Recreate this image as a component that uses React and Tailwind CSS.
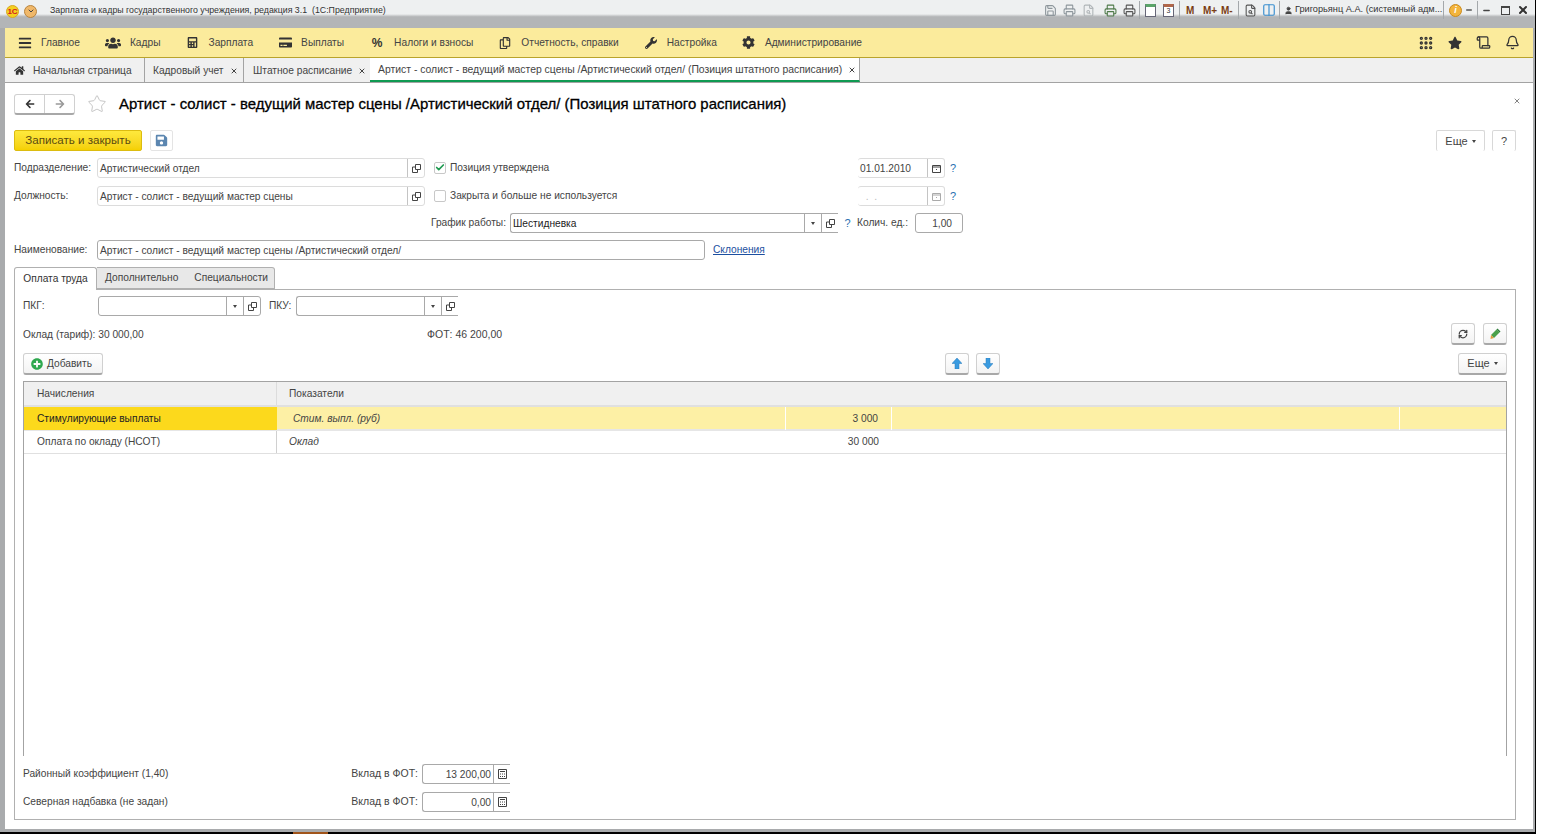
import React from 'react'
import { Bell, Check, ChevronDown, Columns2, FileSearch, Grip, Minus, Printer, RefreshCw, Save, Scroll, Star, User, X } from 'lucide-react'
import { FaArrowLeft, FaArrowRight, FaCalculator, FaCog, FaCreditCard, FaPlusCircle, FaRegCopy, FaSave, FaStar, FaUsers, FaWrench, FaHome, FaBars } from 'react-icons/fa'

const sections = [
  { title: 'Главное', icon: <FaBars size={14} />, box: 'w-[14px] mr-[9px]' },
  { title: 'Кадры', icon: <FaUsers size={16} />, box: 'w-[16px] mr-[9px]' },
  { title: 'Зарплата', icon: <FaCalculator size={11} />, box: 'w-[14px] mr-[9px]' },
  { title: 'Выплаты', icon: <FaCreditCard size={13} />, box: 'w-[14px] mr-[9px]' },
  { title: 'Налоги и взносы', icon: <span className="text-[12px] font-bold">%</span>, box: 'w-[16px] mr-[9px]' },
  { title: 'Отчетность, справки', icon: <FaRegCopy size={12} />, box: 'w-[14px] mr-[9px]' },
  { title: 'Настройка', icon: <FaWrench size={12} />, box: 'w-[14px] mr-[9px]' },
  { title: 'Администрирование', icon: <FaCog size={13} />, box: 'w-[14px] mr-[9px]' },
]

const OpenIcon = ({ className = 'text-[#444]' }) => (
  <svg width="9" height="9" viewBox="0 0 9 9" fill="none" stroke="currentColor" className={className}>
    <path d="M3.5 .5h5v5h-5z" />
    <path d="M3.5 3h-3v5.500h5v-3" />
  </svg>
)

const CalendarIcon = ({ className = 'text-[#444]' }) => (
  <svg width="9" height="9" viewBox="0 0 9 9" fill="none" stroke="currentColor" className={className}>
    <path d="M.5 1.500h8v7h-8z" />
    <path d="M.5 3h8" />
    <path d="M4 5h1v1h-1z" fill="currentColor" stroke="none" />
  </svg>
)

const CalcIcon = () => (
  <svg width="9" height="10" viewBox="0 0 9 10" fill="none" stroke="#444">
    <path d="M.5 .5h8v9h-8z" />
    <path d="M2 2.500h5M2 5h1M4 5h1M6 5h1M2 7.500h1M4 7.500h1M6 7.500h1" />
  </svg>
)

const BlueArrow = ({ down }) => (
  <svg width="10" height="11" viewBox="0 0 10 11" className={down ? 'rotate-180' : ''}>
    <path d="M5 0l5 5.500h-3v5.500h-4v-5.500h-3z" fill="#3a9be0" stroke="#2b7dbd" strokeWidth=".5" />
  </svg>
)

const PenIcon = () => (
  <svg width="12" height="12" viewBox="0 0 12 12">
    <path d="M7.500 1.500l3 3-5.500 5.500-3-3z" fill="#4aa04a" />
    <path d="M2 7l3 3-3.500 1z" fill="#e09a3c" />
    <path d="M8.500.5l3 3-1 1-3-3z" fill="#2f7d3a" />
  </svg>
)

const Arrow = () => <span className="block w-0 h-0 border-x-[2.500px] border-x-transparent border-t-[3px] border-t-[#444]" />

const Field = ({ value = '', width, light, right, buttons = [], textClass = 'text-[#444]' }) => (
  <div className={`flex h-5 shrink-0 bg-white border rounded-[3px] ${width} ${light ? 'border-[#dcdcdc]' : 'border-[#a9a9a9]'}`}>
    <div className={`flex-1 min-w-0 px-[2px] leading-[20px] whitespace-nowrap overflow-hidden ${right ? 'text-right' : ''} ${textClass}`}>{value}</div>
    {buttons.map((b, i) => (
      <div key={i} className={`w-[17px] flex items-center justify-center border-l ${light ? 'border-[#c4c4c4]' : 'border-[#a9a9a9]'}`}>{b}</div>
    ))}
  </div>
)

const Btn = ({ children, className = '' }) => (
  <div className={`flex items-center justify-center rounded-[3px] border border-[#d0d0d0] border-b-[2px] border-b-[#a8a8a8] bg-gradient-to-b from-white to-[#f3f3f3] text-[#444] ${className}`}>{children}</div>
)

const Help = () => <span className="text-[#2a6fb0] text-[11px]">?</span>

const TitleIcons = () => (
  <div className="flex items-center text-[#8d969c]">
    <Save size={13} />
    <Printer size={13} className="ml-[6px]" />
    <FileSearch size={13} className="ml-[6px] text-[#b0b5b8]" />
    <Printer size={13} className="ml-[9px] text-[#4f7a4a]" />
    <Printer size={13} className="ml-[6px] text-[#555]" />
    <div className="w-px h-[18px] bg-[#a4a8ab] ml-[3px]" />
    <div className="ml-[5px] w-[11px] h-[13px] border border-[#667] border-t-[3px] border-t-[#5aa469] bg-white" />
    <div className="ml-[7px] w-[11px] h-[13px] border border-[#667] border-t-[3px] border-t-[#b0664a] bg-white text-[7px] leading-[8px] text-center text-[#333]">3</div>
    <div className="w-px h-[18px] bg-[#a4a8ab] ml-[5px]" />
    <span className="ml-[6px] w-[10px] text-[10px] font-bold text-[#7a3c14]">M</span>
    <span className="ml-[7px] w-[14px] text-[10px] font-bold text-[#7a3c14]">M+</span>
    <span className="ml-[4px] w-[14px] text-[10px] font-bold text-[#7a3c14]">M-</span>
    <div className="w-px h-[18px] bg-[#a4a8ab] ml-[3px]" />
    <FileSearch size={13} className="ml-[5px] text-[#555]" />
    <Columns2 size={14} className="ml-[5px] text-[#3b8fd0]" />
    <div className="w-px h-[18px] bg-[#a4a8ab] ml-[3px]" />
    <User size={9} fill="#444" className="ml-[4px] text-[#444]" />
    <span className="ml-[2px] w-[146px] text-[9.200px] text-[#333] whitespace-nowrap">Григорьянц А.А. (системный адм...</span>
    <div className="w-px h-[18px] bg-[#a4a8ab] ml-[2px]" />
    <div className="ml-[5px] w-[13px] h-[13px] rounded-full bg-[#f3b43c] border border-[#c98a1e] text-white text-[9px] leading-[11px] text-center font-bold italic">i</div>
    <Minus size={8} strokeWidth={4} className="ml-[3px] text-[#555]" />
    <div className="w-px h-[18px] bg-[#a4a8ab] ml-[4px]" />
    <Minus size={9} strokeWidth={4} className="ml-[4px] text-[#444]" />
    <div className="ml-[10px] w-[9px] h-[9px] border border-[#444] border-t-2" />
    <X size={12} strokeWidth={4} className="ml-[7px] mr-[6px] text-[#333]" />
  </div>
)

export default function App() {
  return (
    <div className="flex w-[1542px] h-[834px] overflow-hidden bg-white font-['Liberation_Sans',Arial,sans-serif] text-[10.200px] text-[#444]">
      <div className="flex flex-col w-[1536px] h-full">
        {/* window */}
        <div className="flex-1 min-h-0 flex flex-col border-r border-black bg-[#a9abad]">
          <div className="h-[28px] shrink-0 flex items-center pl-[6px] bg-gradient-to-b from-[#eef0f1] from-50% to-[#b3b5b7] to-60%">
            <div className="mb-[6px] w-[13px] h-[13px] rounded-full bg-[#f5d020] border border-[#d8a820] text-[#d42020] text-[8px] leading-[11px] text-center font-bold">1С</div>
            <div className="mb-[6px] ml-[5px] w-[13px] h-[13px] rounded-full bg-[#f0b86a] border border-[#b8843e] flex items-center justify-center"><ChevronDown size={8} strokeWidth={3} /></div>
            <span className="mb-[6px] ml-[13px] text-[8.800px] text-[#333] whitespace-pre">Зарплата и кадры государственного учреждения, редакция 3.1  (1С:Предприятие)</span>
            <div className="ml-auto pb-[8px]"><TitleIcons /></div>
          </div>

          <div className="flex-1 min-h-0 flex flex-col ml-[5px] mr-[2px] mb-[3px] bg-white">
            {/* sections */}
            <div className="h-[30px] shrink-0 flex items-center pl-[13px] pr-[13px] gap-[25px] bg-[#fbeb9c] border-b border-[#b9a32c] text-[#444]">
              {sections.map((s) => (
                <div key={s.title} className="flex items-center whitespace-nowrap pt-[1px]">
                  <span className={`flex justify-center text-[#333] ${s.box}`}>{s.icon}</span>
                  {s.title}
                </div>
              ))}
              <div className="ml-auto flex items-center gap-[14px] text-[#333]">
                <Grip size={16} strokeWidth={3} />
                <FaStar size={14} />
                <Scroll size={15} />
                <Bell size={15} />
              </div>
            </div>

            {/* open tabs */}
            <div className="h-[25px] shrink-0 flex items-stretch bg-[#f0f0f0] border-b border-[#a3a3a3] whitespace-nowrap">
              <div className="w-[140px] flex items-center pl-[9px] pt-[1px] border-r border-[#a3a3a3]">
                <FaHome size={11} className="text-[#333]" />
                <span className="ml-[8px]">Начальная страница</span>
              </div>
              <div className="w-[99px] flex items-center pl-[8px] pt-[1px] border-r border-[#a3a3a3]">
                Кадровый учет
                <X size={8} strokeWidth={3} className="ml-[6px]" />
              </div>
              <div className="w-[126px] flex items-center pl-[9px] pt-[1px]">
                Штатное расписание
                <X size={8} strokeWidth={3} className="ml-[6px]" />
              </div>
              <div className="w-[490px] flex items-center pl-[8px] pt-[1px] text-[10.400px] bg-white border-b-2 border-[#0f9a52] border-r border-r-[#a3a3a3]">
                Артист - солист - ведущий мастер сцены /Артистический отдел/ (Позиция штатного расписания)
                <X size={8} strokeWidth={3} className="ml-[6px]" />
              </div>
            </div>

            {/* form */}
            <div className="flex-1 min-h-0 flex flex-col pl-[9px] pr-[17px] pt-[10px] pb-[9px]">
              <div className="h-[22px] flex items-center">
                <div className="w-[61px] h-[21px] flex rounded-[3px] border border-[#d0d0d0] border-b-[2px] border-b-[#a8a8a8]">
                  <div className="flex-1 flex items-center justify-center border-r border-[#d0d0d0]"><FaArrowLeft size={10} className="text-[#333]" /></div>
                  <div className="flex-1 flex items-center justify-center"><FaArrowRight size={10} className="text-[#999]" /></div>
                </div>
                <Star size={20} strokeWidth={1} className="ml-[12px] text-[#bbb]" />
                <h1 className="ml-[12px] text-[14.950px] font-medium text-black [-webkit-text-stroke:0.3px_black] whitespace-nowrap">Артист - солист - ведущий мастер сцены /Артистический отдел/ (Позиция штатного расписания)</h1>
                <X size={8} strokeWidth={2} className="ml-auto mr-[-5px] mb-[6px] text-[#444]" />
              </div>

              <div className="mt-[15px] h-[21px] flex items-center">
                <div className="w-[128px] h-[21px] pb-[2px] flex items-center justify-center rounded-[2px] bg-gradient-to-b from-[#fee93c] to-[#f5d000] border border-[#dcbc10] text-[11.600px] text-[#5a4a10]">Записать и закрыть</div>
                <div className="ml-[8px] w-[23px] h-[21px] flex items-center justify-center border border-[#e4e4e4] rounded-[2px]"><FaSave size={13} className="text-[#5b86b0]" /></div>
                <div className="ml-auto flex gap-[7px] text-[11px]">
                  <div className="w-[49px] h-[21px] flex items-center justify-center gap-[4px] border border-[#d8d8d8] border-b-0 rounded-[2px]">Еще <Arrow /></div>
                  <div className="w-[24px] h-[21px] flex items-center justify-center border border-[#d8d8d8] border-b-0 rounded-[2px]">?</div>
                </div>
              </div>

              <div className="mt-[7px] flex flex-col">
                <div className="h-5 flex items-center">
                  <div className="w-[83px] shrink-0">Подразделение:</div>
                  <Field light width="w-[328px]" value="Артистический отдел" buttons={[<OpenIcon />]} />
                  <div className="ml-[9px] w-[424px] flex items-center">
                    <div className="w-[12px] h-[12px] border border-[#c8c8c8] rounded-[2px] flex items-center justify-center"><Check size={13} strokeWidth={4} className="text-[#1e9a50]" /></div>
                    <span className="ml-[4px]">Позиция утверждена</span>
                  </div>
                  <Field light width="w-[87px] border-l-0" value="01.01.2010" buttons={[<CalendarIcon />]} />
                  <span className="ml-[5px]"><Help /></span>
                </div>
                <div className="mt-[8px] h-5 flex items-center">
                  <div className="w-[83px] shrink-0">Должность:</div>
                  <Field light width="w-[328px]" value="Артист - солист - ведущий мастер сцены" buttons={[<OpenIcon />]} />
                  <div className="ml-[9px] w-[424px] flex items-center">
                    <div className="w-[12px] h-[12px] border border-[#c8c8c8] rounded-[2px]" />
                    <span className="ml-[4px]">Закрыта и больше не используется</span>
                  </div>
                  <Field light width="w-[87px] border-l-0" value="  .  .    " textClass="text-[#bbb] whitespace-pre" buttons={[<CalendarIcon className="text-[#aaa]" />]} />
                  <span className="ml-[5px]"><Help /></span>
                </div>
                <div className="mt-[7px] h-5 flex items-center">
                  <div className="w-[496px] shrink-0 pr-[4px] text-right">График работы:</div>
                  <Field width="w-[328px] border-r-0 rounded-r-none" value="Шестидневка" textClass="text-[#222]" buttons={[<Arrow />, <OpenIcon />]} />
                  <div className="w-[19px] text-center"><Help /></div>
                  <div className="w-[58px] whitespace-nowrap">Колич. ед.:</div>
                  <Field width="w-[48px]" value="1,00" right textClass="text-[#444] pr-[10px]" />
                </div>
                <div className="mt-[7px] h-5 flex items-center">
                  <div className="w-[83px] shrink-0">Наименование:</div>
                  <Field width="w-[608px]" value="Артист - солист - ведущий мастер сцены /Артистический отдел/" />
                  <a className="ml-[8px] text-[#1c4fa0] underline">Склонения</a>
                </div>
              </div>

              {/* tabs */}
              <div className="mt-[7px] h-[22px] flex items-end relative z-10 whitespace-nowrap">
                <div className="w-[83px] h-[23px] -mb-px flex items-center justify-center bg-white border border-b-0 border-[#b0b0b0] rounded-t-[3px] text-[#333]">Оплата труда</div>
                <div className="w-[178px] h-[22px] flex items-center pl-[8px] gap-[16px] bg-[#e8e8e8] border border-l-0 border-[#b0b0b0] rounded-tr-[3px]">
                  <span>Дополнительно</span>
                  <span>Специальности</span>
                </div>
              </div>

              <div className="flex-1 min-h-0 flex flex-col border border-[#b0b0b0] px-[8px] pt-[6px] pb-[7px]">
                <div className="h-5 shrink-0 flex items-center">
                  <div className="w-[75px]">ПКГ:</div>
                  <Field width="w-[163px]" buttons={[<Arrow />, <OpenIcon />]} />
                  <div className="ml-[8px] w-[27px]">ПКУ:</div>
                  <Field width="w-[162px] border-r-0 rounded-r-none" buttons={[<Arrow />, <OpenIcon />]} />
                </div>

                <div className="mt-[7px] h-[22px] shrink-0 flex items-center">
                  <div className="w-[404px] pt-[2px]">Оклад (тариф): 30 000,00</div>
                  <div className="pt-[2px] text-[10.500px]">ФОТ: 46 200,00</div>
                  <div className="ml-auto flex gap-[8px]">
                    <Btn className="w-[24px] h-[22px]"><RefreshCw size={10} strokeWidth={3} /></Btn>
                    <Btn className="w-[24px] h-[22px]"><PenIcon /></Btn>
                  </div>
                </div>

                <div className="mt-[8px] h-[22px] shrink-0 flex items-center">
                  <Btn className="w-[80px] h-[22px] gap-[4px] pr-[3px]"><FaPlusCircle size={12} className="text-[#2fa84f]" />Добавить</Btn>
                  <div className="ml-[842px] flex gap-[7px]">
                    <Btn className="w-[24px] h-[22px]"><BlueArrow /></Btn>
                    <Btn className="w-[24px] h-[22px]"><BlueArrow down /></Btn>
                  </div>
                  <Btn className="ml-auto w-[49px] h-[22px] gap-[4px] text-[11px]">Еще <Arrow /></Btn>
                </div>

                {/* table */}
                <div className="mt-[6px] flex-1 min-h-0 border-x border-t border-[#a3a3a3]">
                  <div className="h-[25px] grid grid-cols-[253px_1fr] items-stretch bg-[#f0f0f0] border-b-2 border-[#e0e0e0]">
                    <div className="pl-[13px] leading-[23px] border-r border-[#dcdcdc]">Начисления</div>
                    <div className="pl-[12px] leading-[23px]">Показатели</div>
                  </div>
                  <div className="h-[24px] grid grid-cols-[253px_509px_106px_508px_1fr] bg-[#fdf0a5] border-b-2 border-[#e6e6e6]">
                    <div className="pl-[13px] leading-[23px] bg-[#fcd91c] text-[#222]">Стимулирующие выплаты</div>
                    <div className="pl-[16px] leading-[23px] italic border-r border-white">Стим. выпл. (руб)</div>
                    <div className="pr-[13px] leading-[23px] text-right border-r border-white">3 000</div>
                    <div className="border-r border-white" />
                    <div />
                  </div>
                  <div className="h-[23px] grid grid-cols-[253px_509px_106px_1fr] border-b border-[#e0e0e0]">
                    <div className="pl-[13px] leading-[22px] border-r border-[#d0d0d0]">Оплата по окладу (НСОТ)</div>
                    <div className="pl-[12px] leading-[22px] italic">Оклад</div>
                    <div className="pr-[13px] leading-[22px] text-right">30 000</div>
                    <div />
                  </div>
                </div>

                <div className="mt-[8px] flex flex-col gap-[8px] shrink-0">
                  <div className="h-5 flex items-center">
                    <div className="w-[328px]">Районный коэффициент (1,40)</div>
                    <div className="w-[67px] text-right whitespace-nowrap text-[10.500px]">Вклад в ФОТ:</div>
                    <Field width="w-[88px] ml-[4px] border-r-0 rounded-r-none" value="13 200,00" right buttons={[<CalcIcon />]} />
                  </div>
                  <div className="h-5 flex items-center">
                    <div className="w-[328px]">Северная надбавка (не задан)</div>
                    <div className="w-[67px] text-right whitespace-nowrap text-[10.500px]">Вклад в ФОТ:</div>
                    <Field width="w-[88px] ml-[4px] border-r-0 rounded-r-none" value="0,00" right buttons={[<CalcIcon />]} />
                  </div>
                </div>
              </div>
            </div>
          </div>
        </div>
        <div className="h-[2px] shrink-0 flex bg-black">
          <div className="ml-[293px] w-[35px] bg-[#a0541a]" />
        </div>
      </div>
    </div>
  )
}
